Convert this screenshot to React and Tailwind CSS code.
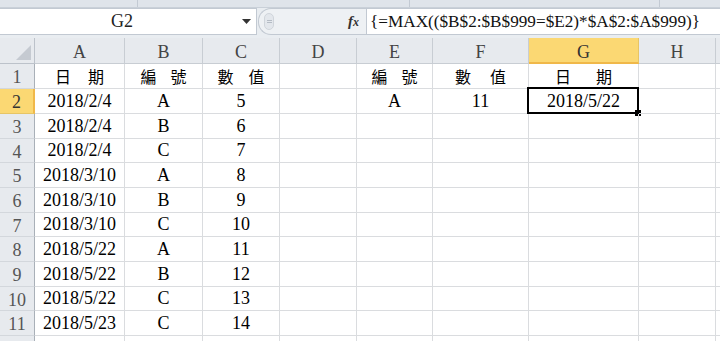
import React from 'react';

const cols = [
  { key: 'A', w: 90 },
  { key: 'B', w: 78 },
  { key: 'C', w: 77 },
  { key: 'D', w: 77 },
  { key: 'E', w: 76 },
  { key: 'F', w: 96 },
  { key: 'G', w: 110 },
  { key: 'H', w: 77 },
];

const rowHeights = [25, 25, 25, 24, 25, 25, 24, 25, 25, 24, 25, 25];

const data = [
  ['2018/2/4', 'A', '5'],
  ['2018/2/4', 'B', '6'],
  ['2018/2/4', 'C', '7'],
  ['2018/3/10', 'A', '8'],
  ['2018/3/10', 'B', '9'],
  ['2018/3/10', 'C', '10'],
  ['2018/5/22', 'A', '11'],
  ['2018/5/22', 'B', '12'],
  ['2018/5/22', 'C', '13'],
  ['2018/5/23', 'C', '14'],
];

// two-character header labels with a wide gap, like "日　期"
function Label({ a, b, gap }) {
  return (
    <span className="flex items-center font-['Noto_Sans_CJK_TC',sans-serif] text-[16px] text-black" style={{ gap }}>
      <span>{a}</span>
      <span>{b}</span>
    </span>
  );
}

function cellContent(r, c) {
  if (r === 0) {
    if (c === 'A') return <Label a="日" b="期" gap={17} />;
    if (c === 'B') return <Label a="編" b="號" gap={14} />;
    if (c === 'C') return <Label a="數" b="值" gap={15} />;
    if (c === 'E') return <Label a="編" b="號" gap={14} />;
    if (c === 'F') return <Label a="數" b="值" gap={19} />;
    if (c === 'G') return <Label a="日" b="期" gap={25} />;
    return null;
  }
  if (r === 1) {
    if (c === 'E') return 'A';
    if (c === 'F') return '11';
    if (c === 'G') return '2018/5/22';
  }
  const d = data[r - 1];
  if (!d) return null;
  if (c === 'A') return d[0];
  if (c === 'B') return d[1];
  if (c === 'C') return d[2];
  return null;
}

export default function App() {
  return (
    <div className="w-[720px] h-[341px] overflow-hidden bg-white flex flex-col font-['Liberation_Serif',serif]">
      {/* ribbon bottom strip */}
      <div className="h-[8px] bg-[#dfe4ea] border-b border-[#c9d0d8] flex shrink-0">
        <div className="w-[138px] border-r border-[#c3cad3]" />
        <div className="w-[272px] border-r border-[#c3cad3]" />
        <div className="w-[250px] border-r border-[#c3cad3]" />
      </div>

      {/* formula bar */}
      <div className="h-[27px] flex shrink-0 bg-[#e9edf1]">
        <div className="w-[257px] bg-white border border-[#c2c9d2] border-l-0 flex items-center relative">
          <span className="flex-1 text-center text-[18px] text-[#222] pl-[8px]">G2</span>
          <span className="w-[20px] flex items-center justify-center">
            <svg width="9" height="5" viewBox="0 0 9 5"><path d="M0 0h9L4.5 5z" fill="#333" /></svg>
          </span>
        </div>
        <div className="w-[108px] flex items-center bg-[#eef1f4] border border-[#c2c9d2] rounded-l-[13px] border-r-0 ml-[1px]">
          <span className="ml-[5px] w-[10px] h-[17px] rounded-full bg-[#e3e7ec] border border-[#d0d5db] flex items-center justify-center">
            <span className="w-[5px] h-[3px] border-y border-[#b5bcc5]" />
          </span>
          <span className="ml-auto mr-[7px] italic font-bold text-[15px] text-[#333] font-['Liberation_Serif',serif]">f<span className="text-[12px]">x</span></span>
        </div>
        <div className="flex-1 bg-white border border-[#c2c9d2] border-r-0 flex items-center pl-[3px]">
          <span className="text-[17.2px] text-[#111] whitespace-nowrap">{'{=MAX(($B$2:$B$999=$E2)*$A$2:$A$999)}'}</span>
        </div>
      </div>
      <div className="h-[3px] bg-[#e9edf1] shrink-0" />

      {/* sheet */}
      <div className="flex flex-col">
        <div className="flex h-[26px] shrink-0">
          <div className="w-[35px] shrink-0 bg-[#e7eaee] border-r border-b border-[#bcc2ca] relative">
            <svg className="absolute right-[3px] bottom-[3px]" width="15" height="15" viewBox="0 0 15 15">
              <path d="M15 0V15H0z" fill="#c5cad1" />
            </svg>
          </div>
          {cols.map((c) => (
            <div
              key={c.key}
              className={
                c.key === 'G'
                  ? 'shrink-0 flex items-center justify-center pt-[4px] text-[18px] text-[#333] bg-[#fbd873] border-r border-[#e7c565] border-b-2 border-b-[#f0b849]'
                  : 'shrink-0 flex items-center justify-center pt-[4px] text-[18px] text-[#444] bg-[#e7eaee] border-r border-b border-[#c8cdd3]'
              }
              style={{ width: c.w }}
            >
              {c.key}
            </div>
          ))}
          <div className="flex-1 bg-[#e7eaee] border-b border-[#c8cdd3]" />
        </div>

        {rowHeights.map((h, r) => (
          <div key={r} className="flex shrink-0" style={{ height: h }}>
            <div
              className={
                r === 1
                  ? 'w-[35px] shrink-0 flex items-center justify-center pt-[3px] text-[18px] text-[#333] bg-[#fbd873] border-b border-[#e7c565] border-r-2 border-r-[#f0b849]'
                  : 'w-[35px] shrink-0 flex items-center justify-center pt-[3px] text-[18px] text-[#555] bg-[#e7eaee] border-b border-[#d3d7dc] border-r border-r-[#a9b0b8]'
              }
            >
              {r < 11 ? r + 1 : null}
            </div>
            {cols.map((c) => {
              const content = cellContent(r, c.key);
              const selected = r === 1 && c.key === 'G';
              return (
                <div
                  key={c.key}
                  className="shrink-0 relative flex items-center justify-center text-[18px] text-black border-r border-b border-[#dadcdf]"
                  style={{ width: c.w }}
                >
                  {content}
                  {selected && (
                    <div className="absolute left-[-2px] top-[-2px] right-[-1px] bottom-[-1px] border-2 border-black">
                      <div className="absolute right-[-4px] bottom-[-4px] w-[6px] h-[6px] bg-black" />
                    </div>
                  )}
                </div>
              );
            })}
            <div className="flex-1 border-b border-[#dadcdf]" />
          </div>
        ))}
      </div>
    </div>
  );
}
